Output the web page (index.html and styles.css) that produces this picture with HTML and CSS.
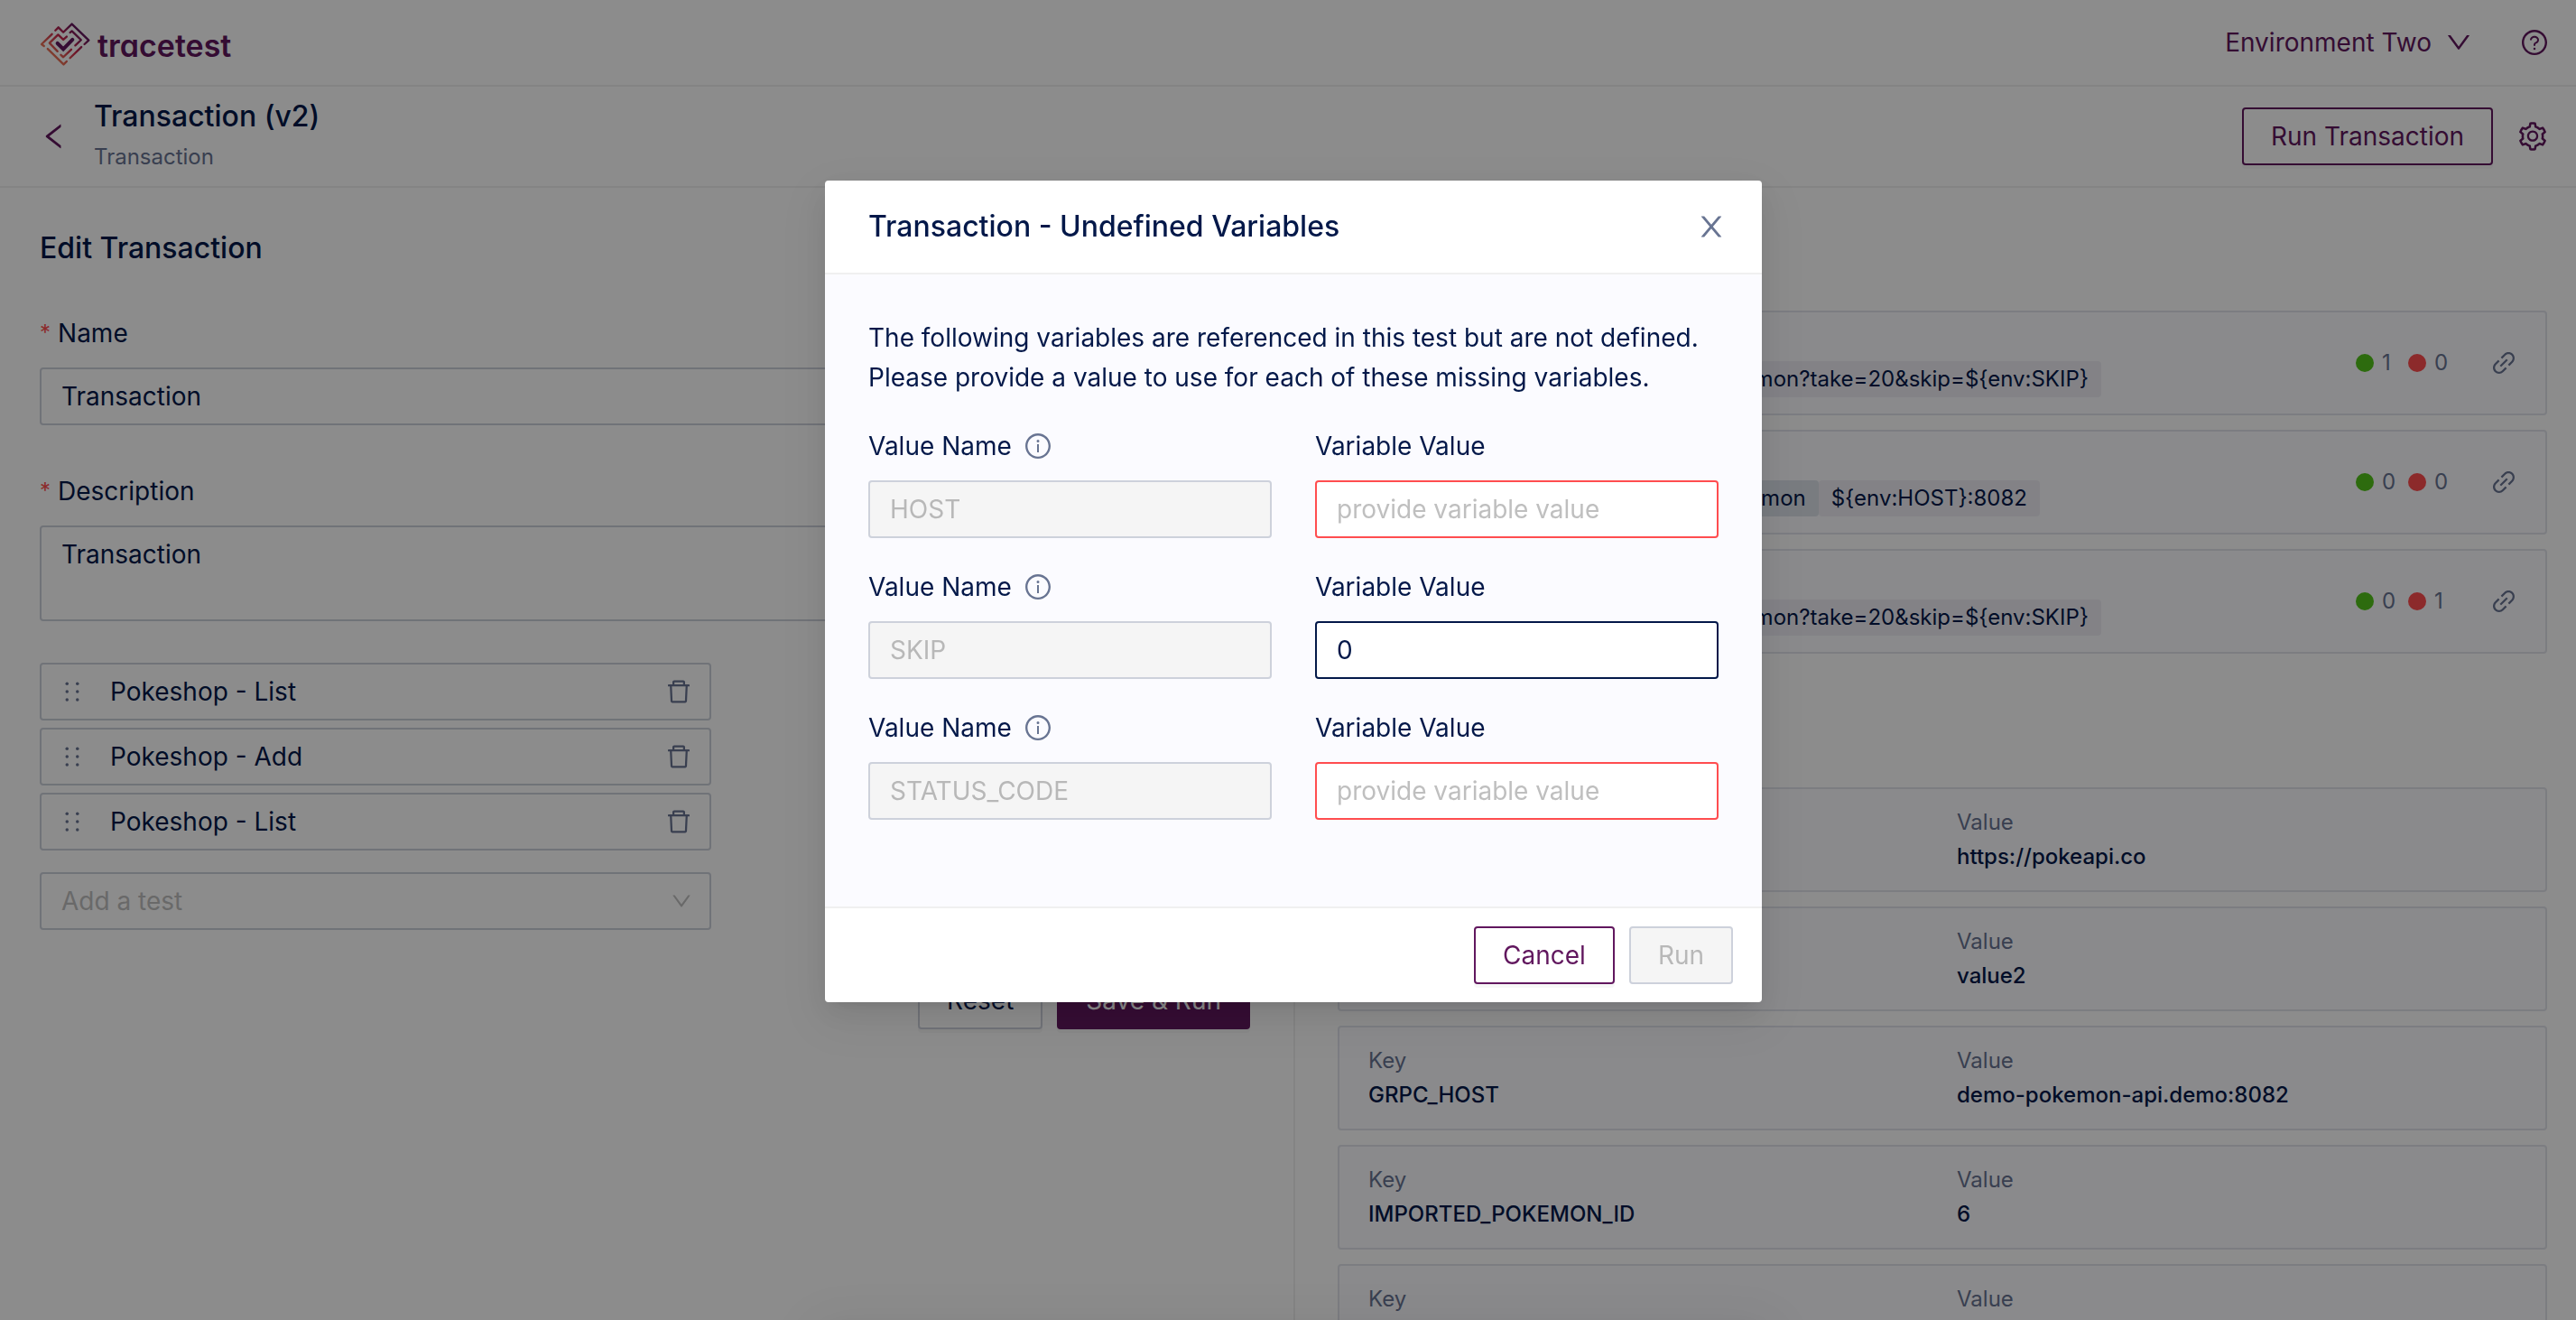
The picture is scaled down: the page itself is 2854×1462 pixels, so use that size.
FILE: index.html
```html
<!DOCTYPE html>
<html lang="en">
<head>
<meta charset="utf-8">
<meta name="viewport" content="width=device-width, initial-scale=1">
<title>Tracetest - Transaction</title>
<link rel="stylesheet" href="styles.css">
</head>
<body>
<svg class="sprite" aria-hidden="true">
  <symbol id="i-down" viewBox="0 0 1024 1024"><path d="M884 256h-75c-5.1 0-9.9 2.5-12.9 6.6L512 654.2 227.9 262.6c-3-4.1-7.8-6.6-12.9-6.6h-75c-6.5 0-10.3 7.4-6.5 12.7l352.6 486.1c12.8 17.6 39 17.6 51.7 0l352.6-486.1c3.9-5.3.1-12.7-6.4-12.7z"/></symbol>
  <symbol id="i-left" viewBox="0 0 1024 1024"><path d="M724 218.3V141c0-6.7-7.7-10.4-12.9-6.3L260.3 486.8a31.86 31.86 0 000 50.3l450.8 352.1c5.3 4.1 12.9.4 12.9-6.3v-77.3c0-4.9-2.3-9.6-6.1-12.6l-360-281 360-281.1c3.8-3 6.1-7.7 6.1-12.6z"/></symbol>
  <symbol id="i-close" viewBox="0 0 1024 1024"><path d="M563.8 512l262.5-312.9c4.4-5.2.7-13.1-6.1-13.1h-79.8c-4.7 0-9.2 2.1-12.3 5.7L511.6 449.8 295.1 191.7c-3-3.6-7.5-5.7-12.3-5.7H203c-6.8 0-10.5 7.9-6.1 13.1L459.4 512 196.9 824.9A7.95 7.95 0 00203 838h79.8c4.7 0 9.2-2.1 12.3-5.7l216.5-258.1 216.5 258.1c3 3.6 7.5 5.7 12.3 5.7h79.8c6.8 0 10.5-7.9 6.1-13.1L563.8 512z"/></symbol>
  <symbol id="i-question" viewBox="0 0 1024 1024"><path d="M512 64C264.6 64 64 264.6 64 512s200.6 448 448 448 448-200.6 448-448S759.4 64 512 64zm0 820c-205.4 0-372-166.6-372-372s166.6-372 372-372 372 166.6 372 372-166.6 372-372 372z"/><path d="M623.6 316.7C593.6 290.4 554 276 512 276s-81.6 14.5-111.6 40.7C369.2 344 352 380.7 352 420v7.6c0 4.4 3.6 8 8 8h48c4.4 0 8-3.6 8-8V420c0-44.1 43.1-80 96-80s96 35.9 96 80c0 31.1-22 59.6-56.1 72.7-21.2 8.1-39.2 22.3-52.1 40.9-13.1 19-19.9 41.8-19.9 64.9V620c0 4.4 3.6 8 8 8h48c4.4 0 8-3.6 8-8v-22.7a48.3 48.3 0 0130.9-44.8c59-22.7 97.1-74.7 97.1-132.5.1-39.3-17.1-76-48.3-103.3zM472 732a40 40 0 1080 0 40 40 0 10-80 0z"/></symbol>
  <symbol id="i-info" viewBox="0 0 1024 1024"><path d="M512 64C264.6 64 64 264.6 64 512s200.6 448 448 448 448-200.6 448-448S759.4 64 512 64zm0 820c-205.4 0-372-166.6-372-372s166.6-372 372-372 372 166.6 372 372-166.6 372-372 372z"/><path d="M464 336a48 48 0 1096 0 48 48 0 10-96 0zm72 112h-48c-4.4 0-8 3.6-8 8v272c0 4.4 3.6 8 8 8h48c4.4 0 8-3.6 8-8V456c0-4.4-3.6-8-8-8z"/></symbol>
  <symbol id="i-delete" viewBox="0 0 1024 1024"><path d="M360 184h-8c4.4 0 8-3.6 8-8v8h304v-8c0 4.4 3.6 8 8 8h-8v72h72v-80c0-35.3-28.7-64-64-64H352c-35.3 0-64 28.7-64 64v80h72v-72zm504 72H160c-17.7 0-32 14.3-32 32v32c0 4.4 3.6 8 8 8h60.4l24.7 523c1.6 34.1 29.8 61 63.9 61h454c34.2 0 62.3-26.8 63.9-61l24.7-523H888c4.4 0 8-3.6 8-8v-32c0-17.7-14.3-32-32-32zM731.3 840H292.7l-24.2-512h487l-24.2 512z"/></symbol>
  <symbol id="i-drag" viewBox="0 0 1024 1024"><circle cx="328" cy="228" r="56"/><circle cx="328" cy="512" r="56"/><circle cx="328" cy="796" r="56"/><circle cx="696" cy="228" r="56"/><circle cx="696" cy="512" r="56"/><circle cx="696" cy="796" r="56"/></symbol>
  <symbol id="i-link" viewBox="0 0 1024 1024"><path d="M574 665.4a8.03 8.03 0 00-11.3 0L446.5 781.6c-53.8 53.8-144.6 59.5-204 0-59.5-59.5-53.8-150.2 0-204l116.2-116.2c3.1-3.1 3.1-8.2 0-11.3l-39.8-39.8a8.03 8.03 0 00-11.3 0L191.4 526.5c-84.6 84.6-84.6 221.5 0 306s221.5 84.6 306 0l116.2-116.2c3.1-3.1 3.1-8.2 0-11.3L574 665.4zm258.6-474c-84.6-84.6-221.5-84.6-306 0L410.3 307.6a8.03 8.03 0 000 11.3l39.7 39.7c3.1 3.1 8.2 3.1 11.3 0l116.2-116.2c53.8-53.8 144.6-59.5 204 0 59.5 59.5 53.8 150.2 0 204L665.3 562.6a8.03 8.03 0 000 11.3l39.8 39.8c3.1 3.1 8.2 3.1 11.3 0l116.2-116.2c84.5-84.6 84.5-221.5 0-306.1zM610.1 372.3a8.03 8.03 0 00-11.3 0L372.3 598.7a8.03 8.03 0 000 11.3l39.6 39.6c3.1 3.1 8.2 3.1 11.3 0l226.4-226.4c3.1-3.1 3.1-8.2 0-11.3l-39.5-39.6z"/></symbol>
  <symbol id="i-setting" viewBox="0 0 1024 1024"><path d="M924.8 625.7l-65.5-56c3.1-19 4.7-38.4 4.7-57.8s-1.6-38.8-4.7-57.8l65.5-56a32.03 32.03 0 009.3-35.2l-.9-2.6a443.74 443.74 0 00-79.7-137.9l-1.8-2.1a32.12 32.12 0 00-35.1-9.5l-81.3 28.9c-30-24.6-63.5-44-99.7-57.6l-15.7-85a32.05 32.05 0 00-25.8-25.7l-2.7-.5c-52.1-9.4-106.9-9.4-159 0l-2.7.5a32.05 32.05 0 00-25.8 25.7l-15.8 85.4a351.86 351.86 0 00-99 57.4l-81.9-29.1a32 32 0 00-35.1 9.5l-1.8 2.1a446.02 446.02 0 00-79.7 137.9l-.9 2.6c-4.5 12.5-.8 26.5 9.3 35.2l66.3 56.6c-3.1 18.8-4.6 38-4.6 57.1 0 19.2 1.5 38.4 4.6 57.1L99 625.5a32.03 32.03 0 00-9.3 35.2l.9 2.6c18.1 50.4 44.9 96.9 79.7 137.9l1.8 2.1a32.12 32.12 0 0035.1 9.5l81.9-29.1c29.8 24.5 63.1 43.9 99 57.4l15.8 85.4a32.05 32.05 0 0025.8 25.7l2.7.5a449.4 449.4 0 00159 0l2.7-.5a32.05 32.05 0 0025.8-25.7l15.7-85a350 350 0 0099.7-57.6l81.3 28.9a32 32 0 0035.1-9.5l1.8-2.1c34.8-41.1 61.6-87.5 79.7-137.9l.9-2.6c4.5-12.3.8-26.3-9.3-35zM788.3 465.9c2.5 15.1 3.8 30.6 3.8 46.1s-1.3 31-3.8 46.1l-6.6 40.1 74.7 63.9a370.03 370.03 0 01-42.6 73.6L721 702.8l-31.4 25.8c-23.9 19.6-50.5 35-79.3 45.8l-38.1 14.3-17.9 97a377.5 377.5 0 01-85 0l-17.9-97.2-37.8-14.5c-28.5-10.8-55-26.2-78.7-45.7l-31.4-25.9-93.4 33.2c-17-22.9-31.2-47.6-42.6-73.6l75.5-64.5-6.5-40c-2.4-14.9-3.7-30.3-3.7-45.5 0-15.3 1.2-30.6 3.7-45.5l6.5-40-75.5-64.5c11.3-26.1 25.6-50.7 42.6-73.6l93.4 33.2 31.4-25.9c23.7-19.5 50.2-34.9 78.7-45.7l37.9-14.3 17.9-97.2c28.1-3.2 56.8-3.2 85 0l17.9 97 38.1 14.3c28.7 10.8 55.4 26.2 79.3 45.8l31.4 25.8 92.8-32.9c17 22.9 31.2 47.6 42.6 73.6L781.8 426l6.5 39.9zM512 326c-97.2 0-176 78.8-176 176s78.8 176 176 176 176-78.8 176-176-78.8-176-176-176zm79.2 255.2A111.6 111.6 0 01512 614c-29.9 0-58-11.7-79.2-32.8A111.6 111.6 0 01400 502c0-29.9 11.7-58 32.8-79.2C454 401.6 482.1 390 512 390c29.9 0 58 11.6 79.2 32.8A111.6 111.6 0 01624 502c0 29.9-11.7 58-32.8 79.2z"/></symbol>
</svg>

<div class="app">
  <header class="topbar">
    <a class="brand" href="#">
      <svg class="brand-mark" viewBox="130 76 165 146" aria-hidden="true">
        <defs>
          <linearGradient id="heart" gradientUnits="userSpaceOnUse" x1="160" y1="190" x2="250" y2="95">
            <stop offset="0" stop-color="#f0825a"/><stop offset=".55" stop-color="#c9264a"/><stop offset="1" stop-color="#61175e"/>
          </linearGradient>
        </defs>
        <g fill="none" stroke="url(#heart)" stroke-width="7" stroke-linecap="round" stroke-linejoin="round">
          <path d="M181 104l10-10 16 16 28-27 55 53-14 13"/>
          <path d="M170 116l-34 33 8 6"/>
          <path d="M156 164l52 51 10-10"/>
          <path d="M266 158l-37 36"/>
          <path d="M188 172l-26-27 28-27 17 16 11-10"/>
          <path d="M229 111l6-5 30 29-19 18"/>
          <path d="M199 184l8 7 26-25"/>
        </g>
        <path d="M188 146l19 19 30-31" fill="none" stroke="#61175e" stroke-width="12" stroke-linecap="round"/>
      </svg>
      <span class="brand-name">tracetest</span>
    </a>
    <div class="topbar-tools">
      <button class="link-button" type="button">Environment Two <svg class="icon"><use href="#i-down"/></svg></button>
      <button class="icon-button" type="button" aria-label="Help"><svg class="icon"><use href="#i-question"/></svg></button>
    </div>
  </header>

  <header class="pagebar">
    <a class="back" href="#" aria-label="Back"><svg class="icon icon-lg"><use href="#i-left"/></svg></a>
    <div class="pagebar-text">
      <h1 class="title">Transaction (v2)</h1>
      <p class="subtitle">Transaction</p>
    </div>
    <div class="pagebar-tools">
      <button class="btn btn-outline" type="button">Run Transaction</button>
      <button class="icon-button" type="button" aria-label="Settings"><svg class="icon icon-lg"><use href="#i-setting"/></svg></button>
    </div>
  </header>

  <main class="columns">
    <form class="edit">
      <h2 class="title">Edit Transaction</h2>
      <div class="fields">
        <div class="field">
          <label class="label required" for="name">Name</label>
          <input class="control" id="name" type="text" value="Transaction">
        </div>
        <div class="field">
          <label class="label required" for="description">Description</label>
          <textarea class="control control-area" id="description" rows="2">Transaction</textarea>
        </div>
      </div>
      <div class="picker">
        <ul class="steps">
          <li class="step"><svg class="icon"><use href="#i-drag"/></svg><span class="step-name">Pokeshop - List</span><button class="icon-button muted" type="button" aria-label="Delete"><svg class="icon"><use href="#i-delete"/></svg></button></li>
          <li class="step"><svg class="icon"><use href="#i-drag"/></svg><span class="step-name">Pokeshop - Add</span><button class="icon-button muted" type="button" aria-label="Delete"><svg class="icon"><use href="#i-delete"/></svg></button></li>
          <li class="step"><svg class="icon"><use href="#i-drag"/></svg><span class="step-name">Pokeshop - List</span><button class="icon-button muted" type="button" aria-label="Delete"><svg class="icon"><use href="#i-delete"/></svg></button></li>
        </ul>
        <div class="select">
          <select class="control control-select" aria-label="Add a test"><option>Add a test</option></select>
          <svg class="icon icon-sm"><use href="#i-down"/></svg>
        </div>
      </div>
      <div class="actions">
        <button class="btn" type="button">Reset</button>
        <button class="btn btn-primary" type="button">Save &amp; Run</button>
      </div>
    </form>

    <section class="details">
      <div class="cards">
        <article class="card card-test">
          <div class="chips chips-http"><span class="chip">pokemon?take=20&amp;skip=${env:SKIP}</span></div>
          <div class="counts"><span class="count pass">1</span><span class="count fail">0</span></div>
          <a class="muted run-link" href="#" aria-label="Open run"><svg class="icon"><use href="#i-link"/></svg></a>
        </article>
        <article class="card card-test">
          <div class="chips chips-grpc"><span class="chip chip-dark">Pokemon</span><span class="chip">${env:HOST}:8082</span></div>
          <div class="counts"><span class="count pass">0</span><span class="count fail">0</span></div>
          <a class="muted run-link" href="#" aria-label="Open run"><svg class="icon"><use href="#i-link"/></svg></a>
        </article>
        <article class="card card-test">
          <div class="chips chips-http"><span class="chip">pokemon?take=20&amp;skip=${env:SKIP}</span></div>
          <div class="counts"><span class="count pass">0</span><span class="count fail">1</span></div>
          <a class="muted run-link" href="#" aria-label="Open run"><svg class="icon"><use href="#i-link"/></svg></a>
        </article>
      </div>
      <div class="cards cards-env">
        <dl class="card card-env"><div><dt>Key</dt><dd></dd></div><div><dt>Value</dt><dd>https://pokeapi.co</dd></div></dl>
        <dl class="card card-env"><div><dt>Key</dt><dd></dd></div><div><dt>Value</dt><dd>value2</dd></div></dl>
        <dl class="card card-env"><div><dt>Key</dt><dd>GRPC_HOST</dd></div><div><dt>Value</dt><dd>demo-pokemon-api.demo:8082</dd></div></dl>
        <dl class="card card-env"><div><dt>Key</dt><dd>IMPORTED_POKEMON_ID</dd></div><div><dt>Value</dt><dd>6</dd></div></dl>
        <dl class="card card-env"><div><dt>Key</dt><dd></dd></div><div><dt>Value</dt><dd></dd></div></dl>
      </div>
    </section>
  </main>
</div>

<div class="mask">
  <form class="modal" role="dialog" aria-modal="true" aria-labelledby="modal-title">
    <header class="modal-head">
      <h2 class="title" id="modal-title">Transaction - Undefined Variables</h2>
      <button class="icon-button muted" type="button" aria-label="Close"><svg class="icon icon-lg"><use href="#i-close"/></svg></button>
    </header>
    <div class="modal-body">
      <p class="intro">The following variables are referenced in this test but are not defined.<br>Please provide a value to use for each of these missing variables.</p>
      <div class="pairs">
        <div class="pair-field"><label class="label" for="n1">Value Name <svg class="icon info"><use href="#i-info"/></svg></label><input class="control" id="n1" type="text" value="HOST" disabled></div>
        <div class="pair-field"><label class="label" for="v1">Variable Value</label><input class="control control-error" id="v1" type="text" placeholder="provide variable value"></div>
        <div class="pair-field"><label class="label" for="n2">Value Name <svg class="icon info"><use href="#i-info"/></svg></label><input class="control" id="n2" type="text" value="SKIP" disabled></div>
        <div class="pair-field"><label class="label" for="v2">Variable Value</label><input class="control control-active" id="v2" type="text" value="0" placeholder="provide variable value"></div>
        <div class="pair-field"><label class="label" for="n3">Value Name <svg class="icon info"><use href="#i-info"/></svg></label><input class="control" id="n3" type="text" value="STATUS_CODE" disabled></div>
        <div class="pair-field"><label class="label" for="v3">Variable Value</label><input class="control control-error" id="v3" type="text" placeholder="provide variable value"></div>
      </div>
    </div>
    <footer class="modal-foot">
      <button class="btn btn-outline" type="button">Cancel</button>
      <button class="btn" type="submit" disabled>Run</button>
    </footer>
  </form>
  <div class="sheet-edge" aria-hidden="true"></div>
</div>
</body>
</html>
```
FILE: styles.css
```css
:root {
  --text: #031849;
  --muted: #687492;
  --primary: #61175e;
  --border: #cdd1db;
  --line: #f0f0f0;
  --surface: #fbfbff;
  --placeholder: #bfbfbf;
  --error: #ff4d4f;
  --raised: 0 6px 12px -8px rgba(0, 0, 0, .12), 0 12px 32px rgba(0, 0, 0, .08), 0 18px 56px 16px rgba(0, 0, 0, .05);
}

* { box-sizing: border-box; }

body {
  margin: 0;
  height: 100vh;
  overflow: hidden;
  background: #fff;
  color: var(--text);
  font: 400 28px/44px Inter, "Liberation Sans", sans-serif;
}

h1, h2, p, ul, dl, dd { margin: 0; padding: 0; }
ul { list-style: none; }
a { color: inherit; text-decoration: none; }
button, input, select, textarea { font: inherit; color: inherit; }

.sprite { display: none; }
.icon { display: block; flex: none; width: 32px; height: 32px; fill: currentColor; }
.icon-sm { width: 26px; height: 26px; }
.icon-lg { width: 36px; height: 36px; }

.title { font-size: 32px; line-height: 52px; font-weight: 500; }

/* Buttons */
.btn {
  height: 64px;
  padding: 0 30px;
  border: 2px solid var(--border);
  border-radius: 4px;
  background: #fff;
  box-shadow: 0 4px 0 rgba(0, 0, 0, .03);
  white-space: nowrap;
}
.btn-outline { border-color: var(--primary); color: var(--primary); }
.btn-primary { border-color: var(--primary); background: var(--primary); color: #fff; }
.btn:disabled { background: #f5f5f5; color: #b8b8b8; box-shadow: none; }
.icon-button, .link-button { padding: 0; border: 0; background: none; color: var(--primary); }
.link-button { display: flex; align-items: center; gap: 14px; }
.muted { color: var(--muted); }

/* Bars */
.topbar, .pagebar {
  display: flex;
  align-items: center;
  justify-content: space-between;
  border-bottom: 2px solid var(--line);
  padding: 0 30px 0 44px;
}
.topbar { height: 96px; }
.brand { display: flex; align-items: center; gap: 8px; padding-top: 4px; color: var(--primary); }
.brand-mark { width: 56px; height: 50px; }
.brand-name { font-size: 34px; line-height: 44px; padding-top: 4px; font-weight: 600; font-feature-settings: "cv11"; }
.topbar-tools { display: flex; align-items: center; gap: 52px; }
.pagebar { height: 112px; padding-left: 42px; }
.back { color: var(--primary); margin-right: 26px; }
.pagebar-text { flex: 1; padding-bottom: 6px; }
.subtitle { color: var(--muted); font-size: 24px; line-height: 38px; }
.pagebar-tools { display: flex; align-items: center; gap: 26px; }

/* Two columns */
.columns { display: grid; grid-template-columns: calc(50% + 8px) 1fr; }
.edit {
  display: flex;
  flex-direction: column;
  gap: 46px;
  padding: 41px 48px 0 44px;
  border-right: 2px solid var(--line);
  height: calc(100vh - 208px);
}
.fields { display: flex; flex-direction: column; gap: 51px; }
.field, .pair-field { display: flex; flex-direction: column; gap: 16px; }
.label { display: flex; align-items: center; gap: 13px; }
.required { gap: 8px; }
.required::before { content: "*"; color: var(--error); font-size: 24px; }

.control {
  width: 100%;
  height: 64px;
  padding: 0 22px;
  border: 2px solid var(--border);
  border-radius: 4px;
  background: #fff;
  outline: none;
}
.control-area { display: block; height: 106px; padding: 8px 22px; resize: none; }
.control::placeholder { color: var(--placeholder); }
.control:disabled { background: #f5f5f5; color: #b8b8b8; }
.control-error { border-color: var(--error); }
.control-active { border-color: var(--text); }

.picker { display: flex; flex-direction: column; gap: 24px; width: 744px; }
.steps { display: flex; flex-direction: column; gap: 8px; }
.step {
  display: flex;
  align-items: center;
  gap: 26px;
  height: 64px;
  padding: 0 18px;
  border: 2px solid var(--border);
  border-radius: 4px;
}
.step > .icon { color: var(--muted); }
.step-name { flex: 1; }
.select { display: grid; align-items: center; }
.select > * { grid-area: 1 / 1; }
.select .icon { justify-self: end; margin-right: 20px; color: var(--placeholder); pointer-events: none; }
.control-select { appearance: none; color: var(--placeholder); }
.actions { display: flex; justify-content: flex-end; gap: 16px; }

/* Run details */
.details { padding: 136px 32px 0 47px; }
.cards { display: flex; flex-direction: column; gap: 16px; }
.cards-env { margin-top: 148px; }
.card {
  display: flex;
  border: 2px solid #e2e4ec;
  border-radius: 4px;
  background: var(--surface);
  height: 116px;
  font-size: 24px;
  line-height: 38px;
}
.card-test { align-items: center; gap: 48px; padding: 0 30px 0 32px; }
.chips { display: flex; justify-content: flex-end; margin-top: 36px; }
.chips-http { width: 812px; }
.chips-grpc { width: 744px; }
.chip { padding: 0 14px; line-height: 40px; border-radius: 4px; background: #eeedf5; white-space: nowrap; }
.chip-dark { background: #dce2ea; }
.counts { display: flex; margin-left: auto; color: var(--muted); }
.count { display: flex; align-items: center; gap: 9px; width: 58px; }
.count::before { content: ""; width: 20px; height: 20px; border-radius: 50%; background: #52c41a; }
.count.fail::before { background: var(--error); }
.run-link { margin-left: -16px; }
.card-env { display: grid; grid-template-columns: 1fr 1fr; gap: 32px; padding: 18px 32px; }
.card-env dt { color: var(--muted); }
.card-env dd { font-weight: 500; }

/* Modal */
.mask {
  position: fixed;
  inset: 0;
  padding: 200px 0 0 12px;
  background: rgba(0, 0, 0, .45);
}
.modal {
  width: 1038px;
  margin: 0 auto;
  border-radius: 4px;
  background: #fff;
  box-shadow: var(--raised);
  overflow: hidden;
}
.modal-head {
  display: flex;
  align-items: center;
  justify-content: space-between;
  padding: 25px 38px 25px 48px;
  border-bottom: 2px solid var(--line);
}
.modal-body { padding: 48px 48px 96px; background: var(--surface); }
.pairs { display: grid; grid-template-columns: 1fr 1fr; gap: 32px 48px; margin-top: 32px; }
.info { color: var(--muted); }
.modal-foot {
  display: flex;
  justify-content: flex-end;
  gap: 16px;
  padding: 20px 32px;
  border-top: 2px solid var(--line);
}

.sheet-edge {
  position: absolute;
  top: 100%;
  left: calc(50% - 513px);
  width: 1038px;
  height: 200px;
  box-shadow: var(--raised);
}
```
